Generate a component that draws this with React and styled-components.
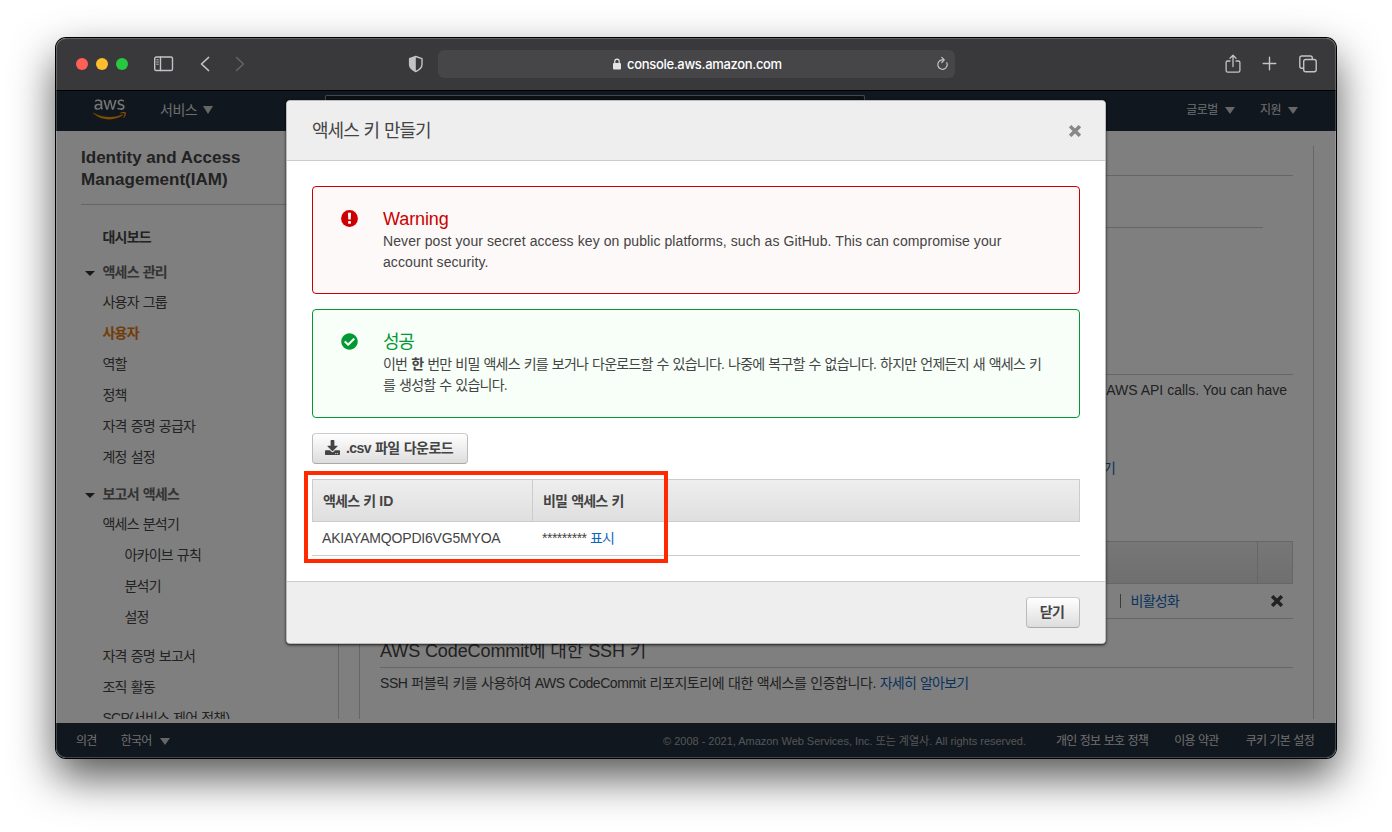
import React from "react";
import styled, { createGlobalStyle, css } from "styled-components";
import { FaAws, FaCheckCircle, FaDownload } from "react-icons/fa";

const GlobalStyle = createGlobalStyle`
  *, *::before, *::after { box-sizing: border-box; }
  body { margin: 0; background: #fff; overflow: hidden; }
`;

const sans = `"Liberation Sans", "Noto Sans CJK KR", sans-serif`;

const hangul = css`
  letter-spacing: -0.055em;
  word-spacing: 0.8px;
`;

const Desktop = styled.div`
  width: 1392px;
  height: 832px;
  padding: 38px 56px;
  background: #fff;
  font-family: ${sans};
  font-size: 14px;
  color: #444;
  white-space: nowrap;
`;

const Window = styled.div`
  position: relative;
  width: 1280px;
  height: 720px;
  border-radius: 10px;
  box-shadow: 0 0 0 1px #000, 0 19px 44px rgba(0, 0, 0, 0.68);
`;

const WindowClip = styled.div`
  height: 100%;
  display: flex;
  flex-direction: column;
  border-radius: 10px;
  overflow: hidden;
  position: relative;
  &::after {
    content: "";
    position: absolute;
    inset: 0;
    border-radius: 10px;
    box-shadow: inset 0 0 0 1px rgba(255, 255, 255, 0.2);
    pointer-events: none;
  }
`;

/* Browser toolbar */
const Toolbar = styled.header`
  flex: none;
  height: 53px;
  display: flex;
  align-items: center;
  padding: 0 18px 0 20px;
  background: #39393c;
  border-bottom: 1px solid #000;
`;

const Lights = styled.div`
  display: flex;
  gap: 8px;
  margin-right: 25px;
`;

const Light = styled.span`
  width: 12px;
  height: 12px;
  border-radius: 50%;
  background: ${(p) => p.$color};
`;

const ToolIcon = styled.svg`
  flex: none;
  fill: none;
  stroke: ${(p) => (p.$dim ? "#67676a" : "#c3c3c5")};
  stroke-width: ${(p) => p.$stroke || 1.4};
  stroke-linecap: round;
  stroke-linejoin: round;
  margin-right: ${(p) => p.$gap || 0}px;
  margin-top: ${(p) => p.$top || 0}px;
`;

const AddressBar = styled.div`
  width: 517px;
  height: 28px;
  border-radius: 6px;
  background: #464649;
  display: flex;
  align-items: center;
  padding: 0 6px 0 174px;
  margin-right: 269px;
  color: #fff;
  font: 500 13px/28px Inter, sans-serif;
  letter-spacing: -0.32px;
`;

const Address = styled.span`
  flex: 1;
  padding-left: 5px;
`;

/* Console page */
const Page = styled.div`
  flex: 1;
  min-height: 0;
  display: flex;
  flex-direction: column;
  position: relative;
  background: #fff;
`;

const ConsoleNav = styled.nav`
  flex: none;
  height: 40px;
  display: flex;
  align-items: center;
  padding: 0 0 0 37px;
  background: #232f3e;
  color: #ddd;
  font-size: 12px;
  letter-spacing: -0.04em;
  > * { flex: none; }
`;

const AwsLogo = styled.div`
  display: grid;
  width: 33px;
  height: 27px;
  margin: -3px 34px 0 0;
  svg { grid-area: 1 / 1; width: 33px; height: 27px; }
  svg:first-child { color: #e8e8e8; clip-path: inset(0 0 43% 0); }
  svg:last-child { color: #f90; clip-path: inset(57% 0 0 0); }
`;

const Menu = styled.div`
  display: flex;
  align-items: center;
  gap: ${(p) => p.$gap || 7}px;
  margin-left: ${(p) => p.$left || 0}px;
  margin-top: -5px;
  font-size: ${(p) => p.$size || 12}px;
`;

const Caret = styled.i`
  display: inline-block;
  margin-top: ${(p) => p.$top ?? 3}px;
  border: solid transparent;
  border-width: ${(p) => p.$size || 7}px 5px 0;
  border-top-color: #ccc;
`;

const SearchBox = styled.div`
  align-self: flex-end;
  width: 540px;
  height: 36px;
  margin-left: 112px;
  border: 1px solid #879196;
  border-bottom: 0;
  border-radius: 2px 2px 0 0;
  background: #1b2027;
`;

const NavEdge = styled.div`
  width: 1px;
  height: 11px;
  margin: -3px 80px 0 240px;
  background: #aaa;
`;

const Workspace = styled.div`
  flex: 1;
  min-height: 0;
  display: flex;
  padding: 15px 22px 0 0;
  margin-bottom: 4px;
  overflow: hidden;
`;

const Sidebar = styled.aside`
  width: 283px;
  padding-left: 25px;
  border-right: 1px solid #ccc;
`;

const ServiceTitle = styled.h1`
  margin: 0;
  height: 59px;
  padding-top: 1px;
  border-bottom: 1px solid #ccc;
  font-size: 17px;
  line-height: 22px;
  letter-spacing: 0.02px;
`;

const NavItem = styled.div`
  height: 31px;
  line-height: 31px;
  padding-left: ${(p) => (p.$nested ? 43.5 : 21.5)}px;
  ${hangul}
  color: ${(p) => (p.$active ? "#e47911" : "#444")};
  font-weight: ${(p) => (p.$active || p.$strong ? 700 : 400)};
  margin-top: ${(p) => p.$top || 0}px;
`;

const NavGroup = styled.div`
  display: flex;
  align-items: center;
  gap: 7.5px;
  height: 29px;
  line-height: 26px;
  padding: 0 0 1px 4px;
  margin-top: ${(p) => p.$top}px;
  font-weight: 700;
  ${hangul}
  color: #666;
  i { border: solid transparent; border-width: 5px 5px 0; border-top-color: #333; margin-top: 3px; }
`;

const Main = styled.main`
  width: 955px;
  margin-left: 20px;
  padding: 0 20px;
  border: solid #ccc;
  border-width: 0 1px;
`;

const Rule = styled.div`
  height: ${(p) => p.$height}px;
  margin-right: ${(p) => p.$right || 0}px;
  border-bottom: 1px solid #ccc;
`;

const Intro = styled.p`
  margin: 0;
  height: 78px;
  padding: 5px 6px 0 0;
  line-height: 21px;
  text-align: right;
`;

const Link = styled.a`
  color: #1166bb;
  ${hangul}
`;

const LearnMore = styled.div`
  height: 88px;
  line-height: 31px;
  padding-right: 178px;
  text-align: right;
`;

const KeyTableHead = styled.div`
  height: 43px;
  display: flex;
  justify-content: flex-end;
  border: 1px solid #ccc;
  background: linear-gradient(#eee, #dfdfdf);
  &::after { content: ""; width: 35px; border-left: 1px solid #ccc; }
`;

const KeyRow = styled.div`
  height: 35px;
  display: flex;
  align-items: center;
  justify-content: flex-end;
  padding: 0 10px 2px 0;
  border-bottom: 1px solid #ccc;
`;

const RowClose = styled.span`
  display: flex;
  margin: 2px 0 0 92px;
`;

const Divider = styled.span`
  width: 1px;
  height: 14px;
  background: #777;
  margin: 2px 10px 0 0;
`;

const SectionTitle = styled.h2`
  margin: 0;
  height: 49px;
  padding-top: 20px;
  border-bottom: 1px solid #ccc;
  font-size: 18px;
  font-weight: 400;
  line-height: 24px;
  letter-spacing: -0.1px;
`;

const Paragraph = styled.p`
  margin: 0;
  padding-top: 4px;
  line-height: 22px;
  letter-spacing: -0.45px;
  word-spacing: 0.4px;
`;

const ConsoleFooter = styled.footer`
  flex: none;
  height: 35px;
  display: flex;
  align-items: center;
  padding: 0 22px 0 20px;
  background: #232f3e;
  color: #ddd;
  font-size: 12px;
  letter-spacing: -0.06em;
  word-spacing: 0.6px;
  line-height: 34px;
`;

const Copyright = styled.span`
  margin-left: auto;
  padding-top: 1px;
  color: #aaa;
  font-size: 11px;
  letter-spacing: -0.02px;
  word-spacing: 0;
`;

const FooterLink = styled.span`
  display: flex;
  align-items: center;
  margin-left: ${(p) => p.$left}px;
`;

const Dim = styled.div`
  position: absolute;
  inset: 0;
  background: rgba(0, 0, 0, 0.5);
`;

/* Dialog */
const Dialog = styled.section`
  position: absolute;
  left: 230px;
  top: 62px;
  width: 820px;
  height: 544px;
  display: flex;
  flex-direction: column;
  border: 1px solid #bbb;
  border-radius: 4px;
  background: #fff;
  box-shadow: 0 1px 3px rgba(0, 0, 0, 0.8);
`;

const DialogHeader = styled.div`
  flex: none;
  height: 60px;
  display: flex;
  align-items: center;
  justify-content: space-between;
  padding: 0 25px 3px;
  background: #eee;
  border-bottom: 1px solid #ccc;
  border-radius: 3px 3px 0 0;
  font-size: 18px;
  ${hangul}
  svg { margin-right: -1px; margin-top: 4px; }
`;

const DialogBody = styled.div`
  flex: 1;
  padding: 25px 25px 0;
`;

const DialogFooter = styled.div`
  flex: none;
  height: 62px;
  display: flex;
  justify-content: flex-end;
  padding: 15px 25px;
  background: #eee;
  border-top: 1px solid #ccc;
  border-radius: 0 0 3px 3px;
`;

const tones = {
  error: css`border-color: #c00; background: #fdf9f8; --tone: #c00;`,
  success: css`border-color: #093; background: #f7fff8; --tone: #093;`,
};

const Alert = styled.div`
  ${(p) => tones[p.$tone]}
  display: flex;
  height: ${(p) => (p.$tone === "error" ? 108 : 109)}px;
  margin-bottom: 15px;
  padding: 20px 28px 0 27.5px;
  border-width: 1px;
  border-style: solid;
  border-radius: 4px;
  > svg { flex: none; width: 17px; height: 17px; margin: 2.5px 25.5px 0 0; color: var(--tone); }
`;

const AlertTitle = styled.div`
  color: var(--tone);
  font-size: 18px;
  line-height: 24px;
  letter-spacing: ${(p) => p.$spacing || "-0.07em"};
`;

const AlertText = styled.div`
  line-height: 21px;
  ${(p) => (p.$hangul ? hangul : "letter-spacing: 0.083px;")}
`;

const Button = styled.button`
  height: 31px;
  width: ${(p) => p.$width}px;
  display: flex;
  align-items: center;
  justify-content: center;
  gap: 6px;
  padding: 0 2px 0 0;
  border: 1px solid #bbb;
  border-color: #ccc #bbb #aaa;
  border-radius: 4px;
  background: linear-gradient(#fff, #ddd);
  color: #444;
  font: 700 14px/29px ${sans};
  letter-spacing: -0.6px;
  word-spacing: 0.9px;
  svg { width: 15px; height: 15px; margin-top: -3px; }
`;

const TableHead = styled.div`
  display: grid;
  grid-template-columns: 219px 1fr;
  height: 43px;
  margin-top: 15px;
  border: 1px solid #ccc;
  background: linear-gradient(#eee, #dfdfdf);
  font-weight: 700;
  line-height: 42px;
  ${hangul}
  span { padding-left: 10px; }
  span + span { border-left: 1px solid #ccc; }
  em { font-style: normal; letter-spacing: 0; }
`;

const TableRow = styled.div`
  display: grid;
  grid-template-columns: 220px 1fr;
  height: 34px;
  line-height: 33px;
  border-bottom: 1px solid #ccc;
  span { padding-left: 10px; }
`;

const KeyId = styled.span`
  letter-spacing: -0.19px;
`;

const Secret = styled.span`
  letter-spacing: -0.5px;
`;

const Highlight = styled.div`
  position: absolute;
  left: 17px;
  top: 370px;
  width: 364px;
  height: 92px;
  border: 4px solid #ff2a00;
`;

const Cross = ({ color }) => (
  <svg width="12" height="12" viewBox="0 0 12 12">
    <path d="M2.400 2.400L9.600 9.600M9.600 2.400L2.400 9.600" stroke={color} strokeWidth="3.500" strokeLinecap="square" />
  </svg>
);

const WarningIcon = () => (
  <svg viewBox="0 0 17 17">
    <circle cx="8.500" cy="8.500" r="8.400" fill="currentColor" />
    <path d="M6.900 2.800h3.200l-.4 6.700H7.300z" fill="#fff" />
    <rect x="7.100" y="11" width="2.800" height="2.700" rx=".4" fill="#fff" />
  </svg>
);

const accessItems = ["사용자 그룹", "사용자", "역할", "정책", "자격 증명 공급자", "계정 설정"];
const analyzerItems = ["아카이브 규칙", "분석기", "설정"];

function BrowserToolbar() {
  return (
    <Toolbar>
      <Lights>
        <Light $color="#ff5f57" />
        <Light $color="#febc2e" />
        <Light $color="#28c840" />
      </Lights>
      <ToolIcon width="21" height="16" $gap={26}>
        <rect x="1.700" y="1" width="17.800" height="13.500" rx="1.600" />
        <path d="M7.500 1v13.500" />
        <path d="M3.700 3.800h1.600M3.700 6h1.600M3.700 8.200h1.600" strokeWidth="1" />
      </ToolIcon>
      <ToolIcon width="10" height="16" $gap={25} $stroke={1.7}><path d="M8.500 1.500L1.500 8l7 6.500" /></ToolIcon>
      <ToolIcon width="10" height="16" $gap={163} $dim><path d="M1.500 1.500l7 6.500-7 6.500" /></ToolIcon>
      <ToolIcon width="16" height="18" $gap={14}>
        <path d="M7.800 1.500L14 3.600v6c0 3-2.500 5.200-6.200 6.900C4 14.800 1.600 12.600 1.600 9.600v-6z" />
        <path d="M7.800 1.500v15C4 14.800 1.600 12.600 1.600 9.600v-6z" fill="#c3c3c5" stroke="none" />
      </ToolIcon>
      <AddressBar>
        <svg width="10" height="12" viewBox="0 0 10 12">
          <rect x="1" y="5" width="8" height="6.500" rx="1" fill="#e4e4e4" />
          <path d="M2.800 5V3.300a2.200 2.200 0 0 1 4.400 0V5" fill="none" stroke="#e4e4e4" strokeWidth="1.200" />
        </svg>
        <Address>console.aws.amazon.com</Address>
        <ToolIcon width="13" height="15" $top={-1} $stroke={1.2}>
          <path d="M10.800 6.700A4.700 4.700 0 1 1 6.300 3.900h1.700M5.800 1.300L8.300 3.900 5.800 6.500" />
        </ToolIcon>
      </AddressBar>
      <ToolIcon width="18" height="20" $gap={20} $top={-1} $stroke={1.3}>
        <path d="M6 7H3.700a1.600 1.600 0 0 0-1.600 1.600v8a1.600 1.600 0 0 0 1.600 1.600h10.600a1.600 1.600 0 0 0 1.600-1.600v-8A1.600 1.600 0 0 0 14.300 7H12M9 12.500V1.500M6 4.300l3-3 3 3" />
      </ToolIcon>
      <ToolIcon width="15" height="15" $gap={21} $top={-1}><path d="M7.500 1.200v12.600M1.200 7.500h12.600" /></ToolIcon>
      <ToolIcon width="20" height="18" $top={-1}>
        <rect x="5.700" y="4.500" width="12.500" height="12.300" rx="2" />
        <path d="M5.500 13.300H3.800a2 2 0 0 1-2-2V3a2 2 0 0 1 2-2h8.500a2 2 0 0 1 2 2v1.300" />
      </ToolIcon>
    </Toolbar>
  );
}

function ConsoleSidebar() {
  return (
    <Sidebar>
      <ServiceTitle>Identity and Access<br />Management(IAM)</ServiceTitle>
      <NavItem $strong $top={17}>대시보드</NavItem>
      <NavGroup $top={5}><i />액세스 관리</NavGroup>
      {accessItems.map((label) => (
        <NavItem key={label} $active={label === "사용자"}>{label}</NavItem>
      ))}
      <NavGroup $top={7}><i />보고서 액세스</NavGroup>
      <NavItem>액세스 분석기</NavItem>
      {analyzerItems.map((label) => (
        <NavItem key={label} $nested>{label}</NavItem>
      ))}
      <NavItem $top={8}>자격 증명 보고서</NavItem>
      <NavItem>조직 활동</NavItem>
      <NavItem>SCP(서비스 제어 정책)</NavItem>
    </Sidebar>
  );
}

export default function App() {
  return (
    <Desktop>
      <GlobalStyle />
      <Window>
        <WindowClip>
          <BrowserToolbar />
          <Page>
            <ConsoleNav>
              <AwsLogo><FaAws /><FaAws /></AwsLogo>
              <Menu $size={14} $gap={6}>서비스<Caret $size={8} /></Menu>
              <SearchBox />
              <NavEdge />
              <Menu>글로벌<Caret /></Menu>
              <Menu $left={25}>지원<Caret /></Menu>
            </ConsoleNav>
            <Workspace>
              <ConsoleSidebar />
              <Main>
                <Rule $height={30} />
                <Rule $height={52} $right={30} />
                <Rule $height={147} />
                <Intro>AWS API calls. You can have</Intro>
                <LearnMore><Link>기</Link></LearnMore>
                <KeyTableHead />
                <KeyRow>
                  <Divider />
                  <Link>비활성화</Link>
                  <RowClose><Cross color="#444" /></RowClose>
                </KeyRow>
                <SectionTitle>AWS CodeCommit에 대한 SSH 키</SectionTitle>
                <Paragraph>
                  SSH 퍼블릭 키를 사용하여 AWS CodeCommit 리포지토리에 대한 액세스를 인증합니다. <Link>자세히 알아보기</Link>
                </Paragraph>
              </Main>
            </Workspace>
            <ConsoleFooter>
              <span>의견</span>
              <FooterLink $left={24}>한국어</FooterLink>
              <FooterLink $left={8}><Caret $top={2} /></FooterLink>
              <Copyright>© 2008 - 2021, Amazon Web Services, Inc. 또는 계열사. All rights reserved.</Copyright>
              <FooterLink $left={30}>개인 정보 보호 정책</FooterLink>
              <FooterLink $left={26}>이용 약관</FooterLink>
              <FooterLink $left={27}>쿠키 기본 설정</FooterLink>
            </ConsoleFooter>
            <Dim />
          </Page>
        </WindowClip>
        <Dialog>
          <DialogHeader>액세스 키 만들기<Cross color="#888" /></DialogHeader>
          <DialogBody>
            <Alert $tone="error">
              <WarningIcon />
              <div>
                <AlertTitle $spacing="-0.1px">Warning</AlertTitle>
                <AlertText>
                  Never post your secret access key on public platforms, such as GitHub. This can compromise your<br />
                  account security.
                </AlertText>
              </div>
            </Alert>
            <Alert $tone="success">
              <FaCheckCircle />
              <div>
                <AlertTitle>성공</AlertTitle>
                <AlertText $hangul>
                  이번 <b>한</b> 번만 비밀 액세스 키를 보거나 다운로드할 수 있습니다. 나중에 복구할 수 없습니다. 하지만 언제든지 새 액세스 키<br />
                  를 생성할 수 있습니다.
                </AlertText>
              </div>
            </Alert>
            <Button $width={156}><FaDownload />.csv 파일 다운로드</Button>
            <TableHead><span>액세스 키 <em>ID</em></span><span>비밀 액세스 키</span></TableHead>
            <TableRow>
              <KeyId>AKIAYAMQOPDI6VG5MYOA</KeyId>
              <Secret>********* <Link>표시</Link></Secret>
            </TableRow>
          </DialogBody>
          <DialogFooter><Button $width={54}>닫기</Button></DialogFooter>
          <Highlight />
        </Dialog>
      </Window>
    </Desktop>
  );
}
